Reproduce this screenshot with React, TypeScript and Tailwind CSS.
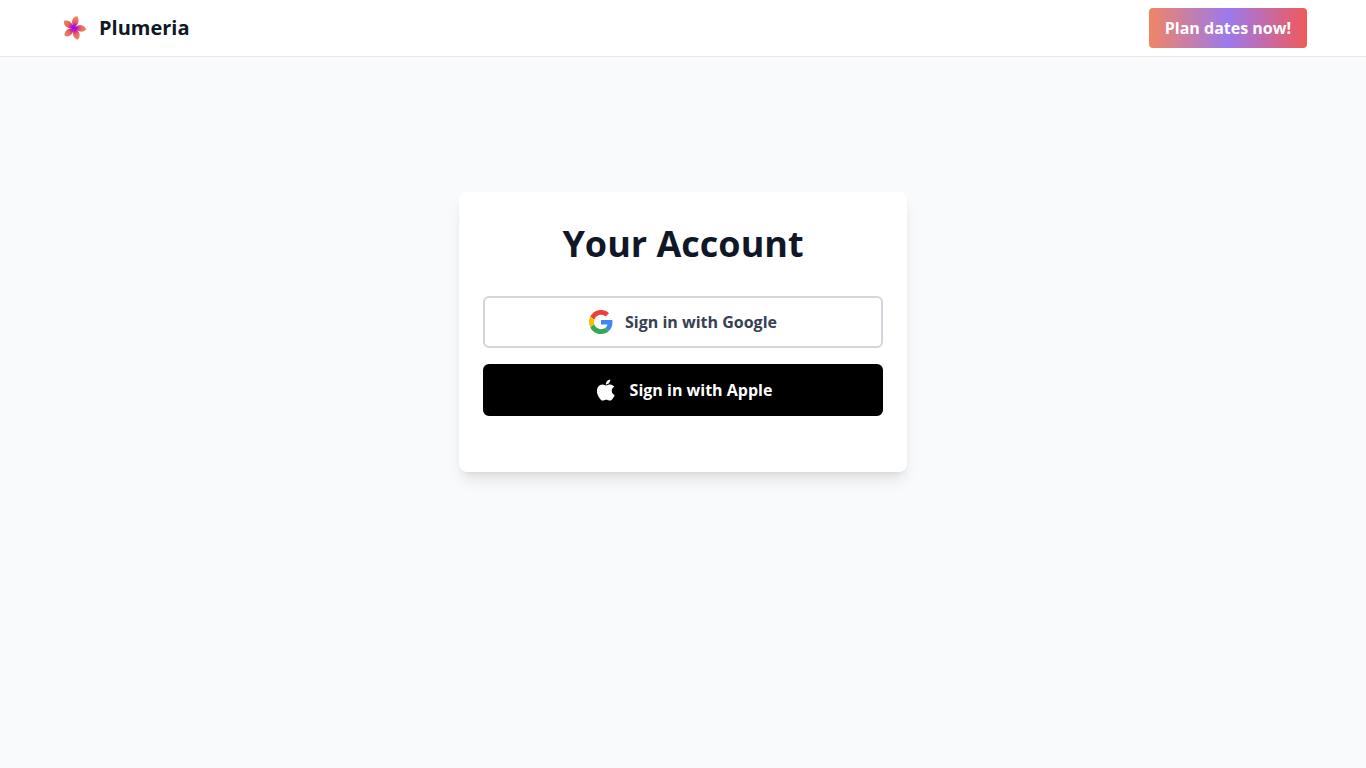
import { useId } from 'react'

const petals = [6, 73, 141, 215, 284]

const PlumeriaLogo = () => {
    const gradientId = useId()

    return (
        <svg viewBox="0 0 32 32" className="size-8" aria-hidden="true">
            <defs>
                <radialGradient id={gradientId} gradientUnits="userSpaceOnUse" cx="15" cy="16" r="12">
                    <stop offset="0" stopColor="#a000e8" />
                    <stop offset="0.22" stopColor="#b010d0" />
                    <stop offset="0.42" stopColor="#dd4a78" />
                    <stop offset="0.65" stopColor="#ee6f55" />
                    <stop offset="1" stopColor="#e58a62" />
                </radialGradient>
            </defs>
            {petals.map((angle) => (
                <path
                    key={angle}
                    d="M14.4 16C16.6 14.8 18.6 12.6 21.8 12.4C24.6 12.4 26.6 14.2 27.2 16.2C25.4 18.4 23 19.2 20.6 18.8C18.2 18.2 16.6 17 14.4 16Z"
                    fill={`url(#${gradientId})`}
                    transform={`rotate(${angle} 15 16)`}
                />
            ))}
        </svg>
    )
}

const GoogleIcon = () => (
    <svg viewBox="0 0 48 48" className="size-6" aria-hidden="true">
        <path fill="#EA4335" d="M24 9.5c3.54 0 6.71 1.22 9.21 3.6l6.85-6.85C35.9 2.38 30.47 0 24 0 14.62 0 6.51 5.38 2.56 13.22l7.98 6.19C12.43 13.72 17.74 9.5 24 9.5z" />
        <path fill="#4285F4" d="M46.98 24.55c0-1.57-.15-3.09-.38-4.55H24v9.02h12.94c-.58 2.96-2.26 5.48-4.78 7.18l7.73 6c4.51-4.18 7.09-10.36 7.09-17.65z" />
        <path fill="#FBBC05" d="M10.53 28.59c-.48-1.45-.76-2.99-.76-4.59s.27-3.14.76-4.59l-7.98-6.19C.92 16.46 0 20.12 0 24c0 3.88.92 7.54 2.56 10.78l7.97-6.19z" />
        <path fill="#34A853" d="M24 48c6.48 0 11.93-2.13 15.89-5.81l-7.73-6c-2.15 1.45-4.92 2.3-8.16 2.3-6.26 0-11.57-4.22-13.47-9.91l-7.98 6.19C6.51 42.62 14.62 48 24 48z" />
    </svg>
)

const AppleIcon = () => (
    <svg viewBox="1.9 1.7 20.5 20.5" className="size-6" fill="currentColor" aria-hidden="true">
        <path d="M17.05 20.28c-.98.95-2.05.8-3.08.35-1.09-.46-2.09-.48-3.24 0-1.44.62-2.2.44-3.06-.35C2.79 15.25 3.51 7.59 9.05 7.31c1.35.07 2.29.74 3.08.8 1.18-.24 2.31-.93 3.57-.84 1.51.12 2.65.72 3.4 1.8-3.12 1.87-2.38 5.98.48 7.13-.57 1.5-1.31 2.99-2.54 4.09zM12.03 7.25c-.15-2.23 1.66-4.07 3.74-4.25.29 2.58-2.34 4.5-3.74 4.25z" />
    </svg>
)

const Header = () => (
    <header className="border-b border-gray-200 bg-white">
        <div className="mx-auto flex max-w-7xl items-center justify-between px-4 py-2">
            <a href="#" className="flex items-center gap-2">
                <PlumeriaLogo />
                <span className="text-xl font-bold text-gray-900">Plumeria</span>
            </a>
            <button
                type="button"
                className="rounded bg-linear-to-r/srgb from-[#f08565] via-[#9c79ec] to-[#f05a5a] px-4 py-2 font-bold text-white"
            >
                Plan dates now!
            </button>
        </div>
    </header>
)

const App = () => {
    return (
        <div className="flex min-h-screen flex-col bg-gray-50 font-['Open_Sans',sans-serif]">
            <Header />
            <main className="flex flex-col items-center px-4 pt-[135px] pb-16">
                <div className="w-full max-w-md rounded-lg bg-white px-6 pt-8 pb-14 shadow-lg">
                    <h1 className="mb-8 text-center text-4xl font-bold text-gray-900">Your Account</h1>
                    <div className="flex flex-col gap-4">
                        <button
                            type="button"
                            className="flex w-full items-center justify-center gap-3 rounded-md border-2 border-gray-300 bg-white px-4 py-3 font-bold text-gray-700"
                        >
                            <GoogleIcon />
                            <span>Sign in with Google</span>
                        </button>
                        <button
                            type="button"
                            className="flex w-full items-center justify-center gap-3 rounded-md border-2 border-black bg-black px-4 py-3 font-bold text-white"
                        >
                            <AppleIcon />
                            <span>Sign in with Apple</span>
                        </button>
                    </div>
                </div>
            </main>
        </div>
    )
}

export default App
